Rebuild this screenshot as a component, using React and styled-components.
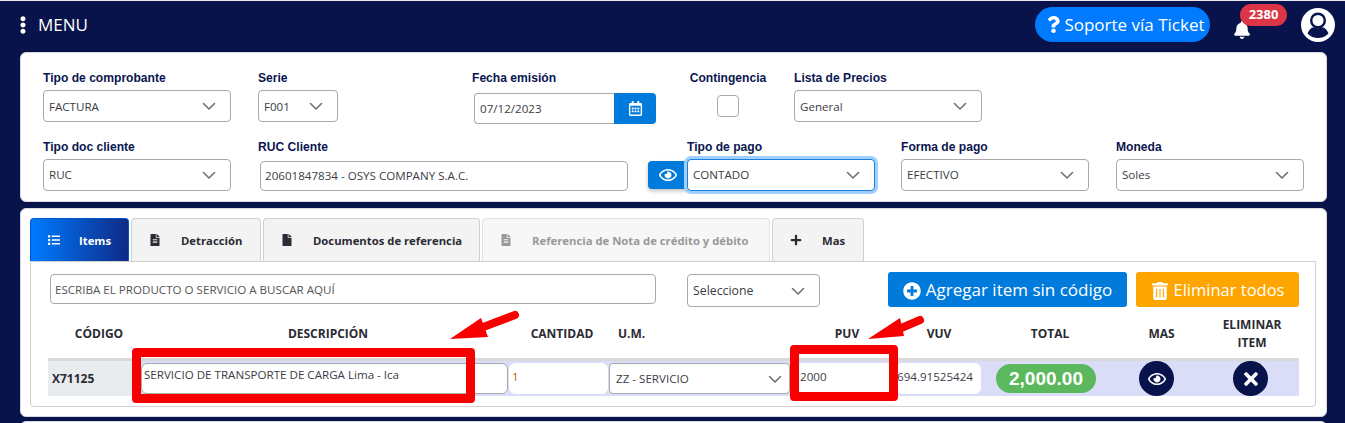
import React from 'react';
import styled, { createGlobalStyle } from 'styled-components';
import {
  FaBell, FaEllipsisV, FaFile, FaFileAlt, FaList, FaPlus, FaPlusCircle,
  FaQuestion, FaRegCalendarAlt, FaRegEye, FaTimes, FaTrashAlt,
} from 'react-icons/fa';

const GlobalStyle = createGlobalStyle`
  html, body {
    margin: 0;
    height: 423px;
    overflow: hidden;
    background: #08124b;
    font-family: "Open Sans", "Liberation Sans", sans-serif;
  }
  * { box-sizing: border-box; }
`;

const Page = styled.div`
  position: relative;
  height: 423px;
  overflow: hidden;
  border-top: 1px solid #e8e8ee;
`;

const TopBar = styled.header`
  height: 51px;
  display: flex;
  align-items: center;
  padding: 0 10px 4px 18px;
  color: #fff;
`;

const MenuButton = styled.div`
  display: flex;
  align-items: center;
  gap: 6px;
  font-size: 17px;
  flex: 1;
  svg { font-size: 18px; margin-left: -4px; }
`;

const TicketButton = styled.div`
  width: 175px;
  height: 35px;
  margin-right: 23px;
  padding-left: 5px;
  background: #007bff;
  border-radius: 18px;
  display: flex;
  align-items: center;
  justify-content: center;
  gap: 2px;
  font-size: 17px;
  white-space: nowrap;
`;

const Bell = styled.div`
  position: relative;
  width: 22px;
  height: 31px;
  margin-right: 46px;
  font-size: 18px;
  display: flex;
  padding-top: 12px;
`;

const Badge = styled.span`
  position: absolute;
  left: 7px;
  top: -5px;
  width: 47px;
  height: 22px;
  border-radius: 11px;
  background: #dc3545;
  font-size: 13px;
  font-weight: 700;
  line-height: 21px;
  text-align: center;
`;

const Card = styled.section`
  width: 1307px;
  margin-left: 20px;
  background: #fff;
  border-radius: 6px;
  border: 1px solid #d8d8de;
`;

const FormCard = styled(Card)`
  height: 150px;
  padding: 17px 22px 0;
  display: flex;
  flex-direction: column;
  gap: 6px;
`;

const FormRow = styled.div`
  display: flex;
  align-items: flex-start;
  height: 64px;
`;

const Field = styled.div`
  width: ${(p) => p.$width}px;
  margin-left: ${(p) => p.$left || 0}px;
  flex: none;
  display: flex;
  flex-direction: column;
`;

const Label = styled.label`
  display: block;
  height: 14px;
  margin: 1px 0 5px;
  font-family: "Liberation Sans", Arial, sans-serif;
  font-size: 12.1px;
  font-weight: 700;
  line-height: 14px;
  color: #0b1650;
  white-space: nowrap;
  text-align: ${(p) => p.$align || 'left'};
`;

const Select = styled.div`
  height: ${(p) => p.$height || 32}px;
  margin-top: ${(p) => p.$top || 0}px;
  border: 1px solid #a9a9a9;
  border-radius: 4px;
  background: #fff;
  display: flex;
  align-items: center;
  justify-content: space-between;
  padding: 0 13px 0 5px;
  font-size: ${(p) => p.$size || 11.6}px;
  color: #3c3c46;
  white-space: nowrap;
`;

const FocusSelect = styled(Select)`
  position: relative;
  border-color: #1c7fdc;
  box-shadow: 0 0 0 3px #9fd0ff;
`;

const TextBox = styled.div`
  height: 30px;
  margin-top: ${(p) => p.$top || 0}px;
  margin-left: ${(p) => p.$left || 0}px;
  border: 1px solid #a9a9a9;
  border-radius: 4px;
  background: #fff;
  display: flex;
  align-items: center;
  padding: 0 4px;
  font-size: 11.6px;
  color: #3c3c46;
  white-space: nowrap;
`;

const DateGroup = styled.div`
  display: flex;
  margin: 3px 0 0 2px;
  height: 31px;
`;

const DateInput = styled(TextBox)`
  width: 140px;
  height: 31px;
  border-radius: 4px 0 0 4px;
  border-right: 0;
  padding-left: 5px;
`;

const BlueAddon = styled.div`
  width: ${(p) => p.$width}px;
  height: ${(p) => p.$height}px;
  background: #007bdb;
  color: #fff;
  display: flex;
  align-items: center;
  justify-content: center;
  font-size: ${(p) => p.$icon}px;
  border-radius: ${(p) => p.$radius};
`;

const EyeAddon = styled(BlueAddon)`
  flex: none;
  margin: 22px 0 0 20px;
  box-shadow: 0 2px 4px rgba(0, 0, 0, 0.25);
`;

const CheckBox = styled.div`
  width: 22px;
  height: 22px;
  margin: 5px auto 0;
  border: 1px solid #a9a9a9;
  border-radius: 4px;
  background: #fff;
`;

const TabsCard = styled(Card)`
  height: 209px;
  margin-top: 6px;
  padding: 9px 10px 0 9px;
`;

const TabBar = styled.nav`
  display: flex;
  gap: 2px;
  height: 43px;
`;

const Tab = styled.div`
  width: ${(p) => p.$width}px;
  height: 43px;
  border: 1px solid ${(p) => (p.$active ? '#0056c8' : p.$disabled ? '#e2e2e2' : '#cfcfcf')};
  border-bottom: 0;
  border-radius: 4px 4px 0 0;
  background: ${(p) => (p.$active
    ? 'linear-gradient(90deg, #007bff 0%, #0e2a86 100%)'
    : p.$disabled ? '#f7f7f7' : '#f3f3f3')};
  color: ${(p) => (p.$active ? '#fff' : p.$disabled ? '#999' : '#2b2b33')};
  display: flex;
  align-items: center;
  padding-left: 17px;
  gap: ${(p) => p.$gap}px;
  font-size: 11.3px;
  font-weight: 700;
  white-space: nowrap;
  svg { font-size: 12px; flex: none; }
`;

const TabPane = styled.div`
  height: 146px;
  border: 1px solid #cfcfcf;
  border-radius: 0 0 4px 4px;
  padding: 10px 16px 0 17px;
`;

const SearchRow = styled.div`
  display: flex;
  align-items: flex-start;
  height: 43px;
  padding-left: 2px;
`;

const ActionButton = styled.div`
  width: ${(p) => p.$width}px;
  height: 35px;
  margin-left: ${(p) => p.$left}px;
  background: ${(p) => p.$color};
  border-radius: 3px;
  color: #fff;
  display: flex;
  align-items: center;
  justify-content: center;
  gap: 5px;
  font-size: ${(p) => p.$size}px;
  white-space: nowrap;
  svg { font-size: 18px; position: relative; top: 1px; }
`;

const SearchBox = styled(TextBox)`
  width: 606px;
  margin-top: 2px;
  color: #555;
`;

const Columns = `93px 368px 100px 186px 101px 86px 136px 87px 94px`;

const TableHead = styled.div`
  display: grid;
  grid-template-columns: ${Columns};
  height: 43px;
  padding-bottom: 6px;
  align-items: center;
`;

const HeadCell = styled.div`
  font-size: 12px;
  font-weight: 700;
  line-height: 17.5px;
  color: #2b2b33;
  text-align: ${(p) => p.$align || 'center'};
  padding-left: ${(p) => p.$pad || 0}px;
`;

const TableRow = styled.div`
  display: grid;
  grid-template-columns: ${Columns};
  height: 38px;
  border-top: 3px solid #d9d9d9;
  background: #d9ddf7;
  align-items: center;
`;

const CodeCell = styled.div`
  height: 100%;
  margin-right: 9px;
  background: #e9ecef;
  display: flex;
  align-items: center;
  padding-left: 4px;
  font-size: 12px;
  font-weight: 700;
  color: #2b2b33;
`;

const CellInput = styled(TextBox)`
  height: 31px;
  margin: -1px 1px 0 0;
  border-color: ${(p) => (p.$plain ? '#fff' : '#a9a9a9')};
  border-radius: 6px;
  color: ${(p) => p.$color || '#3c3c46'};
  padding: 0 ${(p) => p.$right || 2}px ${(p) => p.$lift || 3}px ${(p) => p.$pad || 2}px;
  justify-content: ${(p) => (p.$end ? 'flex-end' : 'flex-start')};
`;

const CellSelect = styled(Select)`
  height: 31px;
  margin: 0 5px 0 0;
  padding-left: 6px;
  padding-right: 6px;
`;

const Total = styled.div`
  width: 100px;
  height: 29px;
  margin-left: 14px;
  border-radius: 15px;
  background: #5cb85c;
  color: #fff;
  font-family: "Liberation Sans", Arial, sans-serif;
  font-size: 19px;
  font-weight: 700;
  display: flex;
  align-items: center;
  justify-content: center;
`;

const RoundButton = styled.div`
  width: 35px;
  height: 35px;
  margin-left: ${(p) => p.$left}px;
  border-radius: 50%;
  background: #08124b;
  color: #fff;
  display: flex;
  align-items: center;
  justify-content: center;
  font-size: ${(p) => p.$icon}px;
`;

const NextCard = styled(Card)`
  height: 20px;
  margin-top: 4px;
`;

// anotaciones rojas dibujadas encima de la captura
const RedBox = styled.div`
  position: absolute;
  left: ${(p) => p.$x}px;
  top: ${(p) => p.$y}px;
  width: ${(p) => p.$w}px;
  height: ${(p) => p.$h}px;
  border: 9px solid #f60000;
  border-radius: 4px;
  pointer-events: none;
`;

const Arrows = styled.svg`
  position: absolute;
  left: 0;
  top: 0;
  pointer-events: none;
`;

const Chevron = () => (
  <svg width="16" height="16" viewBox="0 0 16 16" fill="none" stroke="#6f6f78" strokeWidth="1.6" strokeLinecap="round" strokeLinejoin="round">
    <path d="M2.500 5.500l5.500 5.500 5.500-5.500" />
  </svg>
);

const UserAvatar = () => (
  <svg width="34" height="34" viewBox="0 0 34 34">
    <circle cx="17" cy="17" r="17" fill="#fff" />
    <circle cx="17" cy="12.500" r="6.800" fill="#fff" stroke="#08124b" strokeWidth="2.400" />
    <path d="M6.500 25.500c1.500-3.800 3.800-6 6.500-6.300 2.600 1.400 5.400 1.400 8 0 2.700.3 5 2.500 6.500 6.300-5.500 6-15.500 6-21 0z" fill="#08124b" />
  </svg>
);

const SelectField = ({ label, value, width, left }) => (
  <Field $width={width} $left={left}>
    <Label>{label}</Label>
    <Select>{value}<Chevron /></Select>
  </Field>
);

const App = () => {
  return (
    <Page>
      <GlobalStyle />
      <TopBar>
        <MenuButton><FaEllipsisV /> MENU</MenuButton>
        <TicketButton><FaQuestion size={17} /> Soporte vía Ticket</TicketButton>
        <Bell><FaBell /><Badge>2380</Badge></Bell>
        <UserAvatar />
      </TopBar>

      <FormCard>
        <FormRow>
          <SelectField label="Tipo de comprobante" value="FACTURA" width={188} />
          <SelectField label="Serie" value="F001" width={80} left={27} />
          <Field $width={184} $left={134}>
            <Label>Fecha emisión</Label>
            <DateGroup>
              <DateInput>07/12/2023</DateInput>
              <BlueAddon $width={42} $height={31} $icon={15} $radius="0 4px 4px 0"><FaRegCalendarAlt /></BlueAddon>
            </DateGroup>
          </Field>
          <Field $width={78} $left={33}>
            <Label $align="center">Contingencia</Label>
            <CheckBox />
          </Field>
          <SelectField label="Lista de Precios" value="General" width={188} left={27} />
        </FormRow>
        <FormRow>
          <SelectField label="Tipo doc cliente" value="RUC" width={188} />
          <Field $width={370} $left={27}>
            <Label>RUC Cliente</Label>
            <TextBox $left={2} $top={2}>20601847834 - OSYS COMPANY S.A.C.</TextBox>
          </Field>
          <EyeAddon $width={39} $height={28} $icon={18} $radius="4px 0 0 4px"><FaRegEye /></EyeAddon>
          <Field $width={188}>
            <Label>Tipo de pago</Label>
            <FocusSelect>CONTADO<Chevron /></FocusSelect>
          </Field>
          <SelectField label="Forma de pago" value="EFECTIVO" width={188} left={26} />
          <SelectField label="Moneda" value="Soles" width={188} left={27} />
        </FormRow>
      </FormCard>

      <TabsCard>
        <TabBar>
          <Tab $width={99} $active $gap={19}><FaList /> Items</Tab>
          <Tab $width={130} $gap={20}><FaFileAlt /> Detracción</Tab>
          <Tab $width={217} $gap={20}><FaFile /> Documentos de referencia</Tab>
          <Tab $width={288} $gap={20} $disabled><FaFileAlt /> Referencia de Nota de crédito y débito</Tab>
          <Tab $width={92} $gap={20}><FaPlus /> Mas</Tab>
        </TabBar>
        <TabPane>
          <SearchRow>
            <SearchBox>ESCRIBA EL PRODUCTO O SERVICIO A BUSCAR AQUÍ</SearchBox>
            <Field $width={133} $left={31}>
              <Select $height={33} $top={2} $size={12.3}>Seleccione<Chevron /></Select>
            </Field>
            <ActionButton $width={239} $left={68} $size={17} $color="#007bdb"><FaPlusCircle /> Agregar item sin código</ActionButton>
            <ActionButton $width={163} $left={9} $size={16.5} $color="#ffa500"><FaTrashAlt /> Eliminar todos</ActionButton>
          </SearchRow>
          <TableHead>
            <HeadCell $pad={9}>CÓDIGO</HeadCell>
            <HeadCell $pad={6}>DESCRIPCIÓN</HeadCell>
            <HeadCell $pad={6}>CANTIDAD</HeadCell>
            <HeadCell $align="left" $pad={9}>U.M.</HeadCell>
            <HeadCell $pad={3}>PUV</HeadCell>
            <HeadCell>VUV</HeadCell>
            <HeadCell>TOTAL</HeadCell>
            <HeadCell>MAS</HeadCell>
            <HeadCell>ELIMINAR<br />ITEM</HeadCell>
          </TableHead>
          <TableRow>
            <CodeCell>X71125</CodeCell>
            <CellInput $lift={7}>SERVICIO DE TRANSPORTE DE CARGA Lima - Ica</CellInput>
            <CellInput $plain $color="#b5600f">1</CellInput>
            <CellSelect>ZZ - SERVICIO<Chevron /></CellSelect>
            <CellInput $plain $pad={4}>2000</CellInput>
            <CellInput $plain $end $right={7}>694.91525424</CellInput>
            <Total>2,000.00</Total>
            <RoundButton $left={21} $icon={18}><FaRegEye /></RoundButton>
            <RoundButton $left={28} $icon={20}><FaTimes /></RoundButton>
          </TableRow>
        </TabPane>
      </TabsCard>

      <NextCard />

      <RedBox $x={132} $y={347} $w={343} $h={55} />
      <RedBox $x={790} $y={344} $w={108} $h={56} />
      <Arrows width="1345" height="423" viewBox="0 0 1345 423">
        <path d="M515 314L478 328" stroke="#f60000" strokeWidth="8" strokeLinecap="round" />
        <path d="M450 338L481 317L488 336z" fill="#f60000" />
        <path d="M920 319L892 331" stroke="#f60000" strokeWidth="8" strokeLinecap="round" />
        <path d="M868 338L900 317L904 335z" fill="#f60000" />
      </Arrows>
    </Page>
  );
};

export default App;
